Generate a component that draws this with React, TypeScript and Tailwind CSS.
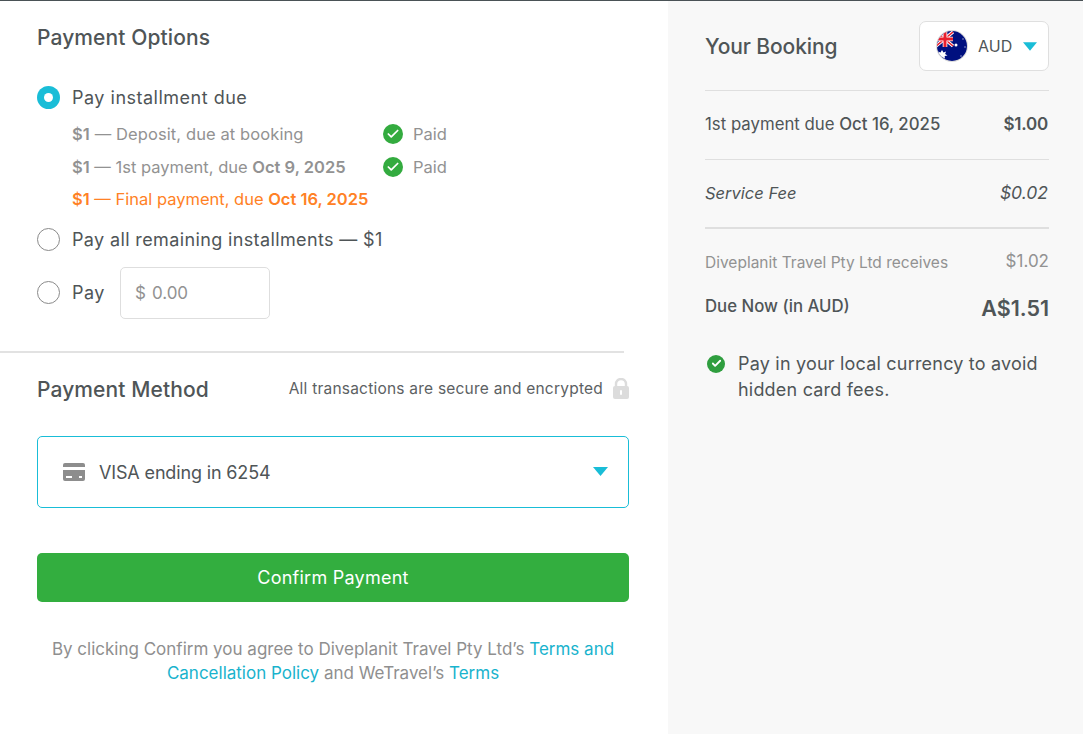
import { Check } from 'lucide-react';

function Caret({ className }: { className: string }) {
  return (
    <svg viewBox="0 0 15 9" className={className}>
      <path d="M0 0h15L7.5 9z" fill="#19bdd7" />
    </svg>
  );
}

function Radio({ active }: { active?: boolean }) {
  if (active) {
    return (
      <span className="flex h-[23px] w-[23px] shrink-0 items-center justify-center rounded-full bg-[#19bdd7]">
        <span className="h-[9px] w-[9px] rounded-full bg-white" />
      </span>
    );
  }
  return <span className="h-[23px] w-[23px] shrink-0 rounded-full border border-[#8a8a8a] bg-white" />;
}

function PaidBadge() {
  return (
    <div className="flex items-center gap-[10px]">
      <span className="flex h-5 w-5 items-center justify-center rounded-full bg-[#33ab3f]">
        <Check className="h-[14px] w-[14px] text-white" strokeWidth={3} />
      </span>
      <span className="text-[16.5px] text-[#929292]">Paid</span>
    </div>
  );
}

function AusFlag() {
  return (
    <svg viewBox="0 0 32 32" className="h-8 w-8 shrink-0">
      <defs>
        <clipPath id="flagClip">
          <circle cx="16" cy="16" r="15" />
        </clipPath>
      </defs>
      <circle cx="16" cy="16" r="16" fill="#dcdcdc" />
      <g clipPath="url(#flagClip)">
        <rect width="32" height="32" fill="#00107f" />
        <path d="M0 2l17 14M17 2L0 16" stroke="#fff" strokeWidth="3.4" />
        <path d="M0 2l17 14M17 2L0 16" stroke="#e8202e" strokeWidth="1.6" />
        <path d="M9 0v17M0 9h17" stroke="#fff" strokeWidth="4.6" />
        <path d="M9 0v17M0 9h17" stroke="#e8202e" strokeWidth="3" />
        <circle cx="20" cy="15" r="1.5" fill="#fff" />
        <circle cx="27" cy="9" r="0.7" fill="#b9c0e0" />
        <circle cx="29" cy="17" r="0.7" fill="#b9c0e0" />
        <circle cx="25" cy="26" r="0.7" fill="#b9c0e0" />
        <path d="M6 20l1.5 2.4 2.6-.9-1 2.6 2.4 1.4-2.8.5.2 2.8-2.9-2-2.9 2 .2-2.8-2.8-.5 2.4-1.4-1-2.6 2.6.9z" fill="#fff" />
      </g>
    </svg>
  );
}

export default function App() {
  return (
    <div className="flex h-[734px] w-[1083px] overflow-hidden border-t border-[#4a5256] bg-white font-['Inter',sans-serif] text-[#4f5557]">
      {/* left side */}
      <div className="w-[668px] shrink-0">
        <div className="pl-[37px] pr-[39px]">
          <h2 className="flex h-[72px] items-center pt-[1px] text-[21px] font-medium leading-none tracking-[0.1px]">Payment Options</h2>

          <div className="mt-[12px] flex h-[24px] items-center gap-[12px]">
            <Radio active />
            <span className="text-[18px] tracking-[0.5px]">Pay installment due</span>
          </div>

          <div className="mt-[9px] pl-[35px] text-[16.5px] leading-[32.5px] text-[#929292]">
            <div className="flex items-center">
              <div className="w-[311px] tracking-[0.1px]"><b className="font-semibold">$1</b> — Deposit, due at booking</div>
              <PaidBadge />
            </div>
            <div className="flex items-center">
              <div className="w-[311px]"><b className="font-semibold">$1</b> — 1st payment, due <b className="font-semibold">Oct 9, 2025</b></div>
              <PaidBadge />
            </div>
            <div className="text-[#ff8125]"><b className="font-semibold">$1</b> — Final payment, due <b className="font-semibold">Oct 16, 2025</b></div>
          </div>

          <div className="mt-[12px] flex h-[24px] items-center gap-[12px]">
            <Radio />
            <span className="text-[18px] tracking-[0.37px]">Pay all remaining installments — $1</span>
          </div>

          <div className="mt-[15px] flex items-center gap-[12px]">
            <Radio />
            <span className="text-[18px] tracking-[0.5px]">Pay</span>
            <div className="ml-[3px] flex h-[52px] w-[150px] items-center gap-[6px] rounded-[5px] border border-[#dedede] pl-[14px] pt-[2px] text-[17px] text-[#929292]">
              <span>$</span>
              <span>0.00</span>
            </div>
          </div>
        </div>

        <div className="mt-[32px] h-[2px] w-[624px] bg-[#e2e2e2]" />

        <div className="pl-[37px] pr-[39px]">
          <div className="mt-[20px] flex h-[32px] items-center justify-between">
            <h2 className="pt-[2px] text-[21px] font-medium tracking-[0.1px]">Payment Method</h2>
            <div className="flex items-center gap-[10px]">
              <span className="text-[15.5px] tracking-[0.22px] text-[#5c6163]">All transactions are secure and encrypted</span>
              <svg viewBox="0 0 16 21" className="h-[21px] w-4">
                <path d="M3 9V6a5 5 0 0 1 10 0v3" fill="none" stroke="#dcdcdc" strokeWidth="2.4" />
                <rect y="8" width="16" height="13" rx="2" fill="#dcdcdc" />
                <rect x="7" y="12" width="2" height="5" rx="1" fill="#fff" />
              </svg>
            </div>
          </div>

          <div className="mt-[31px] flex h-[72px] items-center rounded-[5px] border border-[#19bdd7] pl-[25px] pr-[20px]">
            <svg viewBox="0 0 22 18" className="h-[18px] w-[22px]">
              <path d="M2 0h18a2 2 0 0 1 2 2v2H0V2a2 2 0 0 1 2-2zM0 7h22v9a2 2 0 0 1-2 2H2a2 2 0 0 1-2-2zm3 6v2h6v-2zm13 0v2h3v-2z" fill="#8d8d8d" />
            </svg>
            <span className="ml-[14px] pt-[2px] text-[18px] tracking-[-0.15px]">VISA ending in 6254</span>
            <Caret className="ml-auto h-[9px] w-[15px]" />
          </div>

          <button className="mt-[45px] flex h-[49px] w-full items-center justify-center rounded-[5px] bg-[#33ae3f] text-[18px] tracking-[0.25px] text-white">
            Confirm Payment
          </button>

          <p className="mt-[35px] text-center text-[17px] leading-[24px] text-[#8f8f8f]">
            By clicking Confirm you agree to Diveplanit Travel Pty Ltd’s <span className="text-[#19b3cd]">Terms and</span> <span className="text-[#19b3cd]">Cancellation Policy</span> and WeTravel’s <span className="text-[#19b3cd]">Terms</span>
          </p>
        </div>
      </div>

      {/* right side */}
      <div className="flex-1 bg-[#f8f8f8] pl-[37px] pr-[34px]">
        <div className="flex h-[90px] items-center justify-between border-b border-[#dfdfdf] pt-[1px]">
          <h2 className="pt-[1px] text-[21px] font-medium tracking-[-0.1px]">Your Booking</h2>
          <div className="flex h-[50px] w-[130px] items-center rounded-[7px] border border-[#dfdfdf] bg-white pl-[16px]">
            <AusFlag />
            <span className="ml-[10px] text-[16px]">AUD</span>
            <Caret className="ml-[11px] h-[9px] w-[14px]" />
          </div>
        </div>

        <div className="flex h-[69px] items-center justify-between border-b border-[#dfdfdf]">
          <span className="text-[16.8px]">1st payment due <b className="font-medium">Oct 16, 2025</b></span>
          <span className="mr-[1px] text-[17px] font-semibold tracking-[-0.2px]">$1.00</span>
        </div>

        <div className="flex h-[69px] items-center justify-between border-b-2 border-[#dfdfdf] text-[16.5px] italic">
          <span>Service Fee</span>
          <span className="mr-[1px] text-[17.5px]">$0.02</span>
        </div>

        <div className="mt-[20px] flex items-center justify-between text-[#929292]">
          <span className="text-[15.5px]">Diveplanit Travel Pty Ltd receives</span>
          <span className="pb-[2px] text-[17px]">$1.02</span>
        </div>

        <div className="mt-[15px] flex items-center justify-between">
          <span className="pb-[2px] text-[16.8px] font-medium">Due Now (in AUD)</span>
          <span className="text-[21.5px] font-semibold">A$1.51</span>
        </div>

        <div className="mt-[27px] flex items-start gap-[13px] pl-[2px]">
          <span className="mt-[4px] flex h-[18px] w-[18px] shrink-0 items-center justify-center rounded-full bg-[#2f9e3f]">
            <Check className="h-[11px] w-[11px] text-white" strokeWidth={4} />
          </span>
          <p className="text-[18px] leading-[26px] tracking-[0.2px]">Pay in your local currency to avoid hidden card fees.</p>
        </div>
      </div>
    </div>
  );
}
